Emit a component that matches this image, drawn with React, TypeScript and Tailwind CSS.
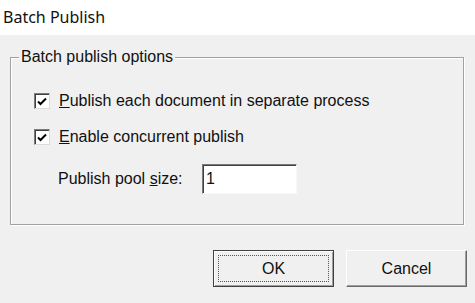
import React from 'react';

const font = { fontFamily: '"Liberation Sans", Arial, sans-serif' };

function CheckBox({ children }: { children: React.ReactNode }) {
  return (
    <label className="flex items-center gap-[9px] h-[18px]">
      <span className="w-[16px] h-[16px] bg-white border border-t-[#7a7a7a] border-l-[#7a7a7a] border-r-[#dcdcdc] border-b-[#dcdcdc] shadow-[inset_1px_1px_0_#404040] flex items-center justify-center">
        <svg width="10" height="9" viewBox="0 0 10 9">
          <path d="M1 4.5 L3.5 7 L9 1.5" fill="none" stroke="#000" strokeWidth="2" />
        </svg>
      </span>
      <span>{children}</span>
    </label>
  );
}

function DlgButton({ label, isDefault }: { label: string; isDefault?: boolean }) {
  return (
    <button
      className={
        'w-[121px] h-[37px] bg-[#f0f0f0] flex items-center justify-center text-[16px] ' +
        (isDefault
          ? 'border border-[#404040] shadow-[inset_1px_1px_0_#fff,inset_-1px_-1px_0_#a0a0a0]'
          : 'border border-t-[#fff] border-l-[#fff] border-r-[#696969] border-b-[#696969] shadow-[inset_-1px_-1px_0_#a0a0a0]')
      }
    >
      {isDefault ? (
        <span className="w-[111px] h-[27px] border border-dotted border-[#555] flex items-center justify-center">
          {label}
        </span>
      ) : (
        label
      )}
    </button>
  );
}

export default function App() {
  return (
    <div className="w-[475px] h-[303px] bg-[#f0f0f0] flex flex-col text-[#111]" style={font}>
      {/* title bar */}
      <div
        className="h-[35px] bg-white pl-[3px] pt-[5px] text-[16px]"
        style={{ fontFamily: '"Noto Sans", "Open Sans", sans-serif' }}
      >
        Batch Publish
      </div>

      {/* group box */}
      <div className="relative ml-[10px] mt-[22px] w-[454px] h-[168px] border border-[#a0a0a0] shadow-[1px_1px_0_#fff,inset_1px_1px_0_#fff] text-[16px]">
        <span className="absolute left-[8px] -top-[10px] px-[2px] bg-[#f0f0f0] leading-[18px]">
          Batch publish options
        </span>
        <div className="flex flex-col pl-[23px] pt-[34px]">
          <CheckBox>
            <u>P</u>ublish each document in separate process
          </CheckBox>
          <div className="h-[18px]" />
          <CheckBox>
            <u>E</u>nable concurrent publish
          </CheckBox>
          <div className="flex items-center mt-[18px] pl-[24px]">
            <span className="w-[144px]">
              Publish pool <u>s</u>ize:
            </span>
            <input
              defaultValue="1"
              className="w-[95px] h-[30px] bg-white px-[3px] text-[16px] outline-none border border-t-[#7a7a7a] border-l-[#7a7a7a] border-r-[#f8f8f8] border-b-[#f8f8f8] shadow-[inset_1px_1px_0_#404040]"
            />
          </div>
        </div>
      </div>

      {/* buttons */}
      <div className="flex justify-end gap-[12px] pr-[8px] mt-[25px]">
        <DlgButton label="OK" isDefault />
        <DlgButton label="Cancel" />
      </div>
    </div>
  );
}
